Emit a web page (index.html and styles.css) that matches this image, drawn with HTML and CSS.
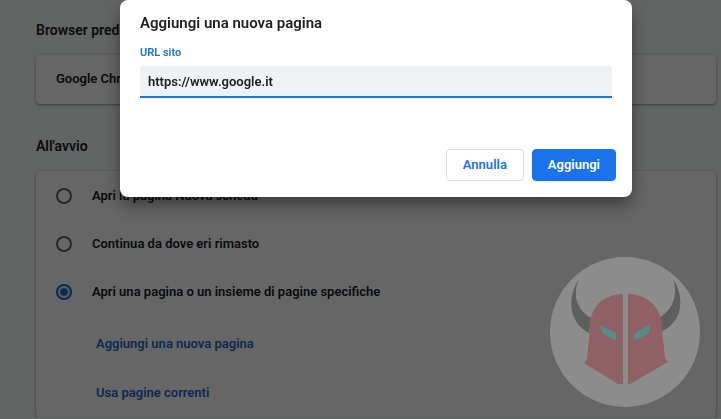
FILE: index.html
```html
<!DOCTYPE html>
<html lang="it">
<head>
<meta charset="utf-8">
<title>Impostazioni</title>
<link rel="stylesheet" href="styles.css">
</head>
<body>
<main class="page">
  <section>
    <h2 class="heading">Browser predefinito</h2>
    <div class="card browser">Google Chrome</div>
  </section>
  <section>
    <h2 class="heading">All'avvio</h2>
    <div class="card startup">
      <label class="option"><input class="radio" type="radio" name="startup">Apri la pagina Nuova scheda</label>
      <label class="option"><input class="radio" type="radio" name="startup">Continua da dove eri rimasto</label>
      <label class="option"><input class="radio" type="radio" name="startup" checked>Apri una pagina o un insieme di pagine specifiche</label>
      <div class="links">
        <a class="link" href="#nuova">Aggiungi una nuova pagina</a>
        <a class="link" href="#correnti">Usa pagine correnti</a>
      </div>
    </div>
  </section>
</main>
<div class="backdrop"></div>
<svg class="emblem" viewBox="0 0 150 150" aria-hidden="true">
  <circle cx="75" cy="75" r="75" fill="#8c8c8c"/>
  <path d="M29 22C17 40 18 65 39 76L41 61C27 53 22 38 29 22Z" fill="#5e5e5e"/>
  <path d="M123 22C135 40 133 65 112 74L109 61C124 52 128 37 123 22Z" fill="#5e5e5e"/>
  <path d="M73 37V127H68L34 106L37 102L41 61C44 46 58 37 73 37Z" fill="#8f6165"/>
  <path d="M78 37V127H80L118 105L115 101L111 61C107 46 93 37 78 37Z" fill="#8f6165"/>
  <path d="M50 68L66 76V83L53 77Z" fill="#519088"/>
  <path d="M100 68L85 76V83L98 77Z" fill="#519088"/>
</svg>
<div class="dialog" role="dialog" aria-labelledby="dialog-title">
  <h1 class="title" id="dialog-title">Aggiungi una nuova pagina</h1>
  <label class="label" for="url">URL sito</label>
  <input class="field" id="url" type="text" value="https://www.google.it">
  <div class="actions">
    <button class="button" type="button">Annulla</button>
    <button class="button primary" type="button">Aggiungi</button>
  </div>
</div>
</body>
</html>
```
FILE: styles.css
```css
* {
  box-sizing: border-box;
}

body {
  margin: 0;
  overflow: hidden;
  background: #f6fcfa;
  color: #202124;
  font: 600 13px/20px Roboto, sans-serif;
}

.page {
  padding: 20px 5px 0 36px;
}

.heading {
  margin: 0 0 15px;
  font-size: 14px;
  font-weight: 600;
  line-height: 20px;
}

.card {
  background: #fff;
  border-radius: 4px;
  box-shadow: 0 1px 2px rgba(60, 64, 67, .4), 0 1px 3px 1px rgba(60, 64, 67, .15);
}

.browser {
  margin-bottom: 32px;
  padding: 14px 20px 15px;
}

.startup {
  padding: 1px 20px 0;
}

.option {
  display: flex;
  align-items: center;
  gap: 20px;
  height: 48px;
}

.radio {
  appearance: none;
  width: 16px;
  height: 16px;
  margin: 0;
  border: 2px solid #5f6368;
  border-radius: 50%;
}

.radio:checked {
  border-color: #1a66d0;
  background: radial-gradient(circle, #1a66d0 3px, transparent 5px);
}

.links {
  display: grid;
  padding: 3px 40px 0;
  justify-items: start;
}

.link {
  color: #1a66d0;
  line-height: 49px;
  text-decoration: none;
}

.backdrop {
  position: fixed;
  inset: 0;
  background: rgba(0, 0, 0, .6);
}

.emblem {
  position: absolute;
  top: 257px;
  right: 21px;
  width: 150px;
}

.dialog {
  position: absolute;
  top: 0;
  left: 120px;
  right: 89px;
  padding: 13px 16px 16px 20px;
  background: #fff;
  border-radius: 8px;
  box-shadow: 0 8px 16px rgba(0, 0, 0, .4);
}

.title {
  margin: 0 0 12px;
  font-size: 15px;
  font-weight: 600;
  line-height: 20px;
}

.label {
  display: block;
  margin-bottom: 5px;
  color: #1a73e8;
  font-size: 11px;
  line-height: 16px;
}

.field {
  display: block;
  width: calc(100% - 4px);
  height: 32px;
  padding: 0 8px;
  border: 0;
  border-bottom: 2px solid #1a73e8;
  border-radius: 4px 4px 0 0;
  outline: 0;
  background: #eef2f5;
  color: #202124;
  font: inherit;
}

.actions {
  display: flex;
  justify-content: flex-end;
  gap: 8px;
  margin-top: 51px;
}

.button {
  min-width: 78px;
  height: 32px;
  padding: 0 15px;
  border: 1px solid #dadce0;
  border-radius: 4px;
  background: #fff;
  color: #1a73e8;
  font: inherit;
}

.primary {
  border-color: #1a73e8;
  background: #1a73e8;
  color: #fff;
}
```
